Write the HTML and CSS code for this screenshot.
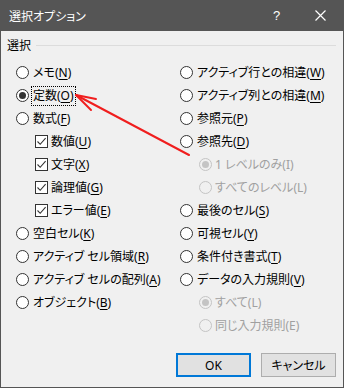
FILE: index.html
```html
<!DOCTYPE html>
<html lang="ja">
<head>
  <meta charset="UTF-8" />
  <title>選択オプション</title>
  <link rel="stylesheet" href="styles.css">
</head>
<body>
  <div class="pencere">
    <div class="baslik">
      <span class="baslik-yazi">選択オプション</span>
      <span class="yardim">?</span>
      <span class="kapat">
        <svg width="11" height="11" viewBox="0 0 11 11"><path d="M0.5 0.5 L10.5 10.5 M10.5 0.5 L0.5 10.5" stroke="#fff" stroke-width="1.2" fill="none"/></svg>
      </span>
    </div>

    <div class="govde">
      <div class="grup-baslik"><span>選択</span><i></i></div>

      <div class="sutunlar">
        <div class="sutun">
          <label class="satir"><span class="radyo"></span><span>メモ(<u>N</u>)</span></label>
          <label class="satir"><span class="radyo secili"></span><span class="odak">定数(<u>O</u>)</span></label>
          <label class="satir"><span class="radyo"></span><span>数式(<u>F</u>)</span></label>
          <label class="satir ic"><span class="kutu"><svg width="11" height="11" viewBox="0 0 11 11"><path d="M1.5 5.5 L4.2 8.3 L9.6 2.2" stroke="#333" stroke-width="1.1" fill="none"/></svg></span><span>数値(<u>U</u>)</span></label>
          <label class="satir ic"><span class="kutu"><svg width="11" height="11" viewBox="0 0 11 11"><path d="M1.5 5.5 L4.2 8.3 L9.6 2.2" stroke="#333" stroke-width="1.1" fill="none"/></svg></span><span>文字(<u>X</u>)</span></label>
          <label class="satir ic"><span class="kutu"><svg width="11" height="11" viewBox="0 0 11 11"><path d="M1.5 5.5 L4.2 8.3 L9.6 2.2" stroke="#333" stroke-width="1.1" fill="none"/></svg></span><span>論理値(<u>G</u>)</span></label>
          <label class="satir ic"><span class="kutu"><svg width="11" height="11" viewBox="0 0 11 11"><path d="M1.5 5.5 L4.2 8.3 L9.6 2.2" stroke="#333" stroke-width="1.1" fill="none"/></svg></span><span>エラー値(<u>E</u>)</span></label>
          <label class="satir"><span class="radyo"></span><span>空白セル(<u>K</u>)</span></label>
          <label class="satir"><span class="radyo"></span><span>アクティブ セル領域(<u>R</u>)</span></label>
          <label class="satir"><span class="radyo"></span><span>アクティブ セルの配列(<u>A</u>)</span></label>
          <label class="satir"><span class="radyo"></span><span>オブジェクト(<u>B</u>)</span></label>
        </div>

        <div class="sutun">
          <label class="satir"><span class="radyo"></span><span>アクティブ行との相違(<u>W</u>)</span></label>
          <label class="satir"><span class="radyo"></span><span>アクティブ列との相違(<u>M</u>)</span></label>
          <label class="satir"><span class="radyo"></span><span>参照元(<u>P</u>)</span></label>
          <label class="satir"><span class="radyo"></span><span>参照先(<u>D</u>)</span></label>
          <label class="satir ic pasif"><span class="radyo secili"></span><span>1 レベルのみ(I)</span></label>
          <label class="satir ic pasif"><span class="radyo"></span><span>すべてのレベル(L)</span></label>
          <label class="satir"><span class="radyo"></span><span>最後のセル(<u>S</u>)</span></label>
          <label class="satir"><span class="radyo"></span><span>可視セル(<u>Y</u>)</span></label>
          <label class="satir"><span class="radyo"></span><span>条件付き書式(<u>T</u>)</span></label>
          <label class="satir"><span class="radyo"></span><span>データの入力規則(<u>V</u>)</span></label>
          <label class="satir ic pasif"><span class="radyo secili"></span><span>すべて(L)</span></label>
          <label class="satir ic pasif"><span class="radyo"></span><span>同じ入力規則(E)</span></label>
        </div>
      </div>

      <div class="butonlar">
        <button class="buton varsayilan">OK</button>
        <button class="buton">キャンセル</button>
      </div>
    </div>

    <!-- kırmızı ok -->
    <svg class="ok" width="344" height="388" viewBox="0 0 344 388">
      <g stroke="#f01e1e" stroke-width="2" fill="none" stroke-linecap="round">
        <path d="M189 155 L76 95"/>
        <path d="M76 95 L96 99"/>
        <path d="M76 95 L91 110"/>
      </g>
    </svg>
  </div>
</body>
</html>
```

FILE: styles.css
```css
* {
  margin: 0;
  padding: 0;
  box-sizing: border-box;
}

body {
  font-family: "Noto Sans", "Noto Sans CJK JP", sans-serif;
  font-size: 12px;
  font-feature-settings: "palt";
  color: #000;
  background: #f0f0f0;
}

.pencere {
  width: 344px;
  height: 388px;
  border: 1px solid #555;
  border-top: none;
  display: flex;
  flex-direction: column;
  position: relative;
  background: #f0f0f0;
}

.baslik {
  height: 31px;
  background: #555;
  color: #fff;
  display: flex;
  align-items: center;
  padding-left: 9px;
  margin: 0 -1px;
}

.baslik-yazi {
  flex: 1;
  font-size: 12px;
}

.yardim {
  width: 10px;
  margin-right: 32px;
  font-family: "Liberation Sans", sans-serif;
  font-size: 13px;
}

.kapat {
  width: 11px;
  height: 11px;
  margin-right: 18px;
  display: flex;
}

.govde {
  flex: 1;
  display: flex;
  flex-direction: column;
  padding: 5px 7px 10px 6px;
}

/* Grup başlığı ve çizgi */
.grup-baslik {
  display: flex;
  align-items: center;
  height: 18px;
  margin-bottom: 7px;
}

.grup-baslik i {
  flex: 1;
  height: 1px;
  background: #dcdcdc;
  margin-left: 5px;
  margin-top: 1px;
}

.sutunlar {
  display: grid;
  grid-template-columns: 164px 1fr;
  padding-left: 9px;
}

.sutun {
  display: flex;
  flex-direction: column;
}

.satir {
  height: 23px;
  display: flex;
  align-items: center;
  gap: 4px;
  white-space: nowrap;
  line-height: 1;
}

.satir.ic {
  padding-left: 19px;
  gap: 3px;
}

.satir u {
  text-decoration: underline;
  text-underline-offset: 2px;
}

.radyo {
  width: 13px;
  height: 13px;
  border: 1px solid #333;
  border-radius: 50%;
  background: #fff;
  flex-shrink: 0;
  display: flex;
  align-items: center;
  justify-content: center;
}

.radyo.secili::after {
  content: "";
  width: 7px;
  height: 7px;
  border-radius: 50%;
  background: #333;
}

.pasif {
  color: #a0a0a0;
}

.pasif .radyo {
  border-color: #c4c4c4;
  background: #f0f0f0;
}

.pasif .radyo.secili::after {
  background: #c4c4c4;
}

.kutu {
  width: 13px;
  height: 13px;
  border: 1px solid #333;
  background: #fff;
  flex-shrink: 0;
  display: flex;
}

.odak {
  outline: 1px dotted #000;
  padding: 3px 1px;
  margin-left: -1px;
}

.butonlar {
  margin-top: auto;
  display: flex;
  justify-content: flex-end;
  gap: 10px;
}

.buton {
  width: 75px;
  height: 24px;
  font-family: "Noto Sans", "Noto Sans CJK JP", sans-serif;
  font-size: 12px;
  font-feature-settings: "palt";
  background: #e1e1e1;
  border: 1px solid #adadad;
  color: #000;
}

.buton.varsayilan {
  border: 2px solid #0078d7;
}

.ok {
  position: absolute;
  left: -1px;
  top: 0;
  pointer-events: none;
}
```
